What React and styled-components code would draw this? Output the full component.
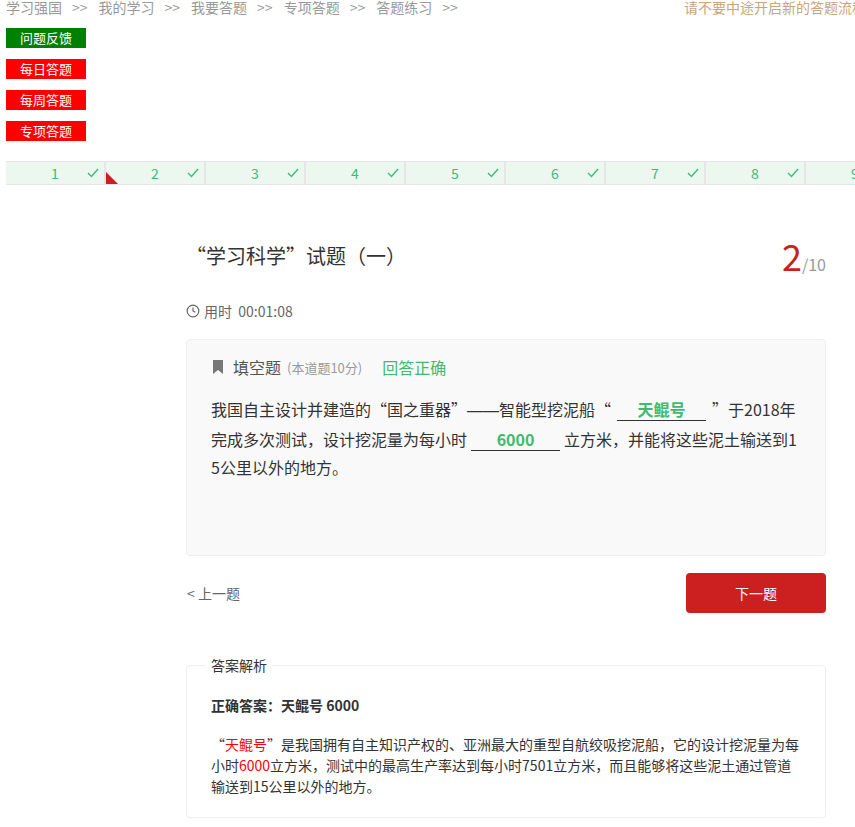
import styled, { createGlobalStyle } from "styled-components";

const GlobalStyle = createGlobalStyle`
  html, body {
    margin: 0;
    padding: 0;
    background: #fff;
  }
  body {
    font-family: "Noto Sans CJK SC", "Microsoft YaHei", sans-serif;
    color: #333;
    overflow-x: hidden;
  }
`;

const Page = styled.div`
  width: 855px;
  overflow: hidden;
`;

const TopBar = styled.div`
  display: flex;
  height: 14px;
  font-size: 14px;
  line-height: 14px;
  white-space: nowrap;
`;

const Crumbs = styled.div`
  flex: 0 0 678px;
  padding-left: 6px;
  color: #999;
`;

const Sep = styled.span`
  margin: 0 11px 0 10px;
`;

const Notice = styled.div`
  color: #c8a57c;
  flex-shrink: 0;
`;

const SideButtons = styled.div`
  display: flex;
  flex-direction: column;
  gap: 11px;
  margin: 14px 0 0 6px;
`;

const TagButton = styled.div`
  width: 80px;
  height: 20px;
  line-height: 20px;
  text-align: center;
  font-size: 13px;
  color: #fff;
  background: ${(p) => (p.$green ? "#008000" : "#ff0000")};
`;

const Progress = styled.div`
  display: flex;
  margin: 20px 0 0 6px;
  border-top: 1px solid #e6e6e6;
  border-bottom: 1px solid #e6e6e6;
`;

const Cell = styled.div`
  position: relative;
  flex: 0 0 98px;
  height: 22px;
  border-right: 2px solid #e6e6e6;
  background: #ebf7ef;
  display: flex;
  align-items: center;
  justify-content: center;
  font-size: 14px;
  color: #3dbb7e;
`;

const CheckMark = styled.svg`
  position: absolute;
  right: 5px;
  top: 6px;
`;

const Current = styled.div`
  position: absolute;
  left: 0;
  bottom: 0;
  width: 0;
  height: 0;
  border-bottom: 12px solid #cc1f20;
  border-right: 12px solid transparent;
`;

const Main = styled.div`
  width: 640px;
  margin-left: 186px;
`;

const TitleRow = styled.div`
  display: flex;
  align-items: center;
  justify-content: space-between;
  height: 36px;
  margin-top: 52px;
`;

const Title = styled.div`
  font-size: 20px;
  color: #333;
`;

const Score = styled.div`
  color: #999;
  font-size: 16px;

  & b {
    font-weight: normal;
    font-size: 36px;
    color: #cc1f20;
  }
`;

const TimeRow = styled.div`
  display: flex;
  align-items: center;
  gap: 4px;
  margin-top: 30px;
  font-size: 14px;
  line-height: 16px;
  color: #666;
`;

const Card = styled.div`
  box-sizing: border-box;
  height: 217px;
  margin-top: 20px;
  padding: 18px 24px 0 24px;
  background: #f9f9f9;
  border: 1px solid #eee;
  border-radius: 4px;
`;

const CardHead = styled.div`
  display: flex;
  align-items: center;
  height: 18px;
  padding-left: 2px;
`;

const Kind = styled.span`
  margin-left: 10px;
  font-size: 16px;
  color: #555;
`;

const Points = styled.span`
  margin-left: 6px;
  font-size: 13px;
  color: #999;
`;

const Verdict = styled.span`
  margin-left: 20px;
  font-size: 16px;
  color: #3dbb6e;
`;

const Stem = styled.div`
  margin-top: 19px;
  font-size: 16px;
  line-height: 28px;
  color: #333;
  word-break: break-all;
`;

const Dash = styled.span`
  font-family: "Liberation Sans", sans-serif;
`;

const Blank = styled.span`
  display: inline-block;
  width: 89px;
  margin: 0 ${(p) => p.$gap || 4}px;
  border-bottom: 1px solid #333;
  line-height: 21px;
  text-align: center;
  font-weight: bold;
  color: #3dbb6e;
  word-break: keep-all;
`;

const NavRow = styled.div`
  display: flex;
  align-items: center;
  justify-content: space-between;
  margin-top: 17px;
`;

const PrevLink = styled.div`
  font-size: 14px;
  color: #666;
  padding-left: 1px;
`;

const NextButton = styled.div`
  width: 140px;
  height: 40px;
  line-height: 40px;
  text-align: center;
  border-radius: 4px;
  background: #cc1f20;
  color: #fff;
  font-size: 14px;
`;

const Analysis = styled.fieldset`
  margin: 42px 0 0 0;
  padding: 0 24px 20px 24px;
  border: 1px solid #eee;
  border-radius: 4px;
  min-width: 0;
`;

const Legend = styled.legend`
  padding: 0 5px;
  margin-left: -5px;
  font-size: 14px;
  line-height: 20px;
  color: #333;
`;

const Correct = styled.div`
  margin-top: 20px;
  font-size: 14px;
  line-height: 20px;
  font-weight: bold;
  color: #333;
`;

const Explain = styled.p`
  margin: 19px 0 0 0;
  font-size: 14px;
  line-height: 21px;
  color: #333;
  word-break: break-all;
`;

const Red = styled.span`
  color: #f00;
`;

const crumbs = ["学习强国", "我的学习", "我要答题", "专项答题", "答题练习"];

export default function App() {
  return (
    <Page>
      <GlobalStyle />
      <TopBar>
        <Crumbs>
          {crumbs.map((c) => (
            <span key={c}>
              {c}
              <Sep>&gt;&gt;</Sep>
            </span>
          ))}
        </Crumbs>
        <Notice>请不要中途开启新的答题流程</Notice>
      </TopBar>

      <SideButtons>
        <TagButton $green>问题反馈</TagButton>
        <TagButton>每日答题</TagButton>
        <TagButton>每周答题</TagButton>
        <TagButton>专项答题</TagButton>
      </SideButtons>

      <Progress>
        {Array.from({ length: 10 }, (_, i) => (
          <Cell key={i}>
            {i + 1}
            <CheckMark width="12" height="10" viewBox="0 0 12 10">
              <polyline points="1,5 4.5,8.5 11,1" fill="none" stroke="#3dbb7e" strokeWidth="1.4" />
            </CheckMark>
            {i === 1 && <Current />}
          </Cell>
        ))}
      </Progress>

      <Main>
        <TitleRow>
          <Title>“学习科学”试题（一）</Title>
          <Score>
            <b>2</b>/10
          </Score>
        </TitleRow>

        <TimeRow>
          <svg width="14" height="14" viewBox="0 0 24 24" fill="none" stroke="#666" strokeWidth="2">
            <circle cx="12" cy="12" r="10" />
            <polyline points="12 6 12 12 16 14" />
          </svg>
          <span>用时&nbsp;&nbsp;00:01:08</span>
        </TimeRow>

        <Card>
          <CardHead>
            <svg width="10" height="14" viewBox="0 0 10 14">
              <path d="M0 0 H10 V14 L5 10 L0 14 Z" fill="#777" />
            </svg>
            <Kind>填空题</Kind>
            <Points>(本道题10分)</Points>
            <Verdict>回答正确</Verdict>
          </CardHead>
          <Stem>
            我国自主设计并建造的“国之重器”<Dash>——</Dash>智能型挖泥船“<Blank $gap={6}>天鲲号</Blank>”于2018年完成多次测试，设计挖泥量为每小时
            <Blank>6000</Blank>立方米，并能将这些泥土输送到15公里以外的地方。
          </Stem>
        </Card>

        <NavRow>
          <PrevLink>&lt; 上一题</PrevLink>
          <NextButton>下一题</NextButton>
        </NavRow>

        <Analysis>
          <Legend>答案解析</Legend>
          <Correct>正确答案：天鲲号 6000</Correct>
          <Explain>
            “<Red>天鲲号</Red>”是我国拥有自主知识产权的、亚洲最大的重型自航绞吸挖泥船，它的设计挖泥量为每小时
            <Red>6000</Red>立方米，测试中的最高生产率达到每小时7501立方米，而且能够将这些泥土通过管道输送到15公里以外的地方。
          </Explain>
        </Analysis>
      </Main>
    </Page>
  );
}
